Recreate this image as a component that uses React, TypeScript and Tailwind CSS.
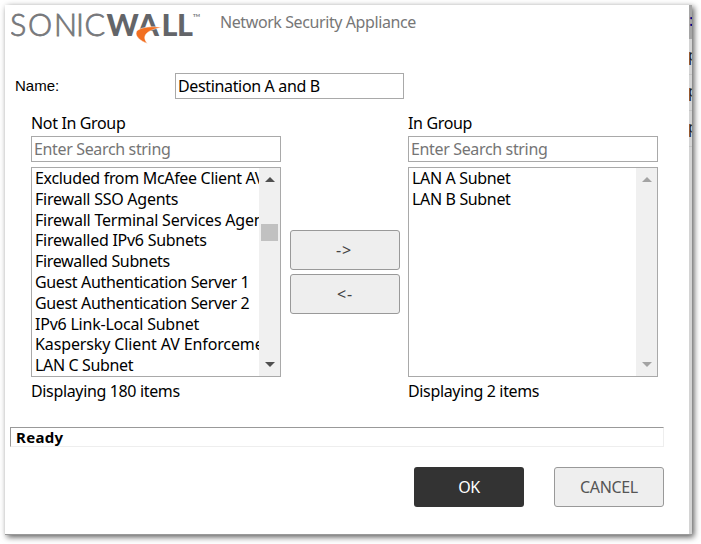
import React from 'react';

interface Item {
  name: string;
  tracking?: string;
}

interface GroupListProps {
  title: string;
  items: Item[];
  count: string;
  scrollable?: boolean;
}

const available: Item[] = [
  { name: 'Excluded from McAfee Client AV', tracking: 'tracking-[-0.32px]' },
  { name: 'Firewall SSO Agents', tracking: 'tracking-[-0.25px]' },
  { name: 'Firewall Terminal Services Agents', tracking: 'tracking-[-0.22px]' },
  { name: 'Firewalled IPv6 Subnets', tracking: 'tracking-[-0.26px]' },
  { name: 'Firewalled Subnets' },
  { name: 'Guest Authentication Server 1' },
  { name: 'Guest Authentication Server 2' },
  { name: 'IPv6 Link-Local Subnet', tracking: 'tracking-[-0.22px]' },
  { name: 'Kaspersky Client AV Enforcement', tracking: 'tracking-[-0.12px]' },
  { name: 'LAN C Subnet' },
];

const selected: Item[] = [{ name: 'LAN A Subnet' }, { name: 'LAN B Subnet' }];

function Logo() {
  return (
    <svg width="194" height="40" viewBox="0 0 194 40" className="shrink-0 tracking-normal">
      <text x="-1 17 43 65 73.5" y="30.5" fontFamily="Lato" fontSize="30.5" fontWeight="300" fill="#77787b" stroke="#77787b" strokeWidth="0.8">SONIC</text>
      <text x="95.5 126.5 150.5 166" y="30.5" fontFamily="Lato" fontSize="30.5" fontWeight="900" fill="#636569">WALL</text>
      <text x="182" y="11.5" fontFamily="Lato" fontSize="4.5" fontWeight="700" fill="#6d6e71">TM</text>
      <path d="M151 22.5C142 20.8 129 21.8 125.5 26.5C123.5 31 129 36 136.5 38.5C131.5 33 132 25.5 151 22.5Z" fill="#f26f21" stroke="#fff" strokeWidth="0.5" />
    </svg>
  );
}

function GroupList({ title, items, count, scrollable }: GroupListProps) {
  const arrow = scrollable ? '#505050' : '#a3a3a3';
  return (
    <div className="w-[250px]">
      <div className="h-[22px] leading-[22px]">{title}</div>
      <input
        placeholder="Enter Search string"
        className="mt-[2px] block h-[26px] w-full border border-[#a9a9a9] bg-white px-[2px] placeholder:text-[#757575] placeholder:opacity-100"
      />
      <div className="mt-[5px] flex h-[210px] border border-[#a9a9a9]">
        <ul className="min-w-0 flex-1 overflow-hidden pl-[3px]">
          {items.map((item) => (
            <li key={item.name} className={`h-[20.8px] whitespace-nowrap leading-[20.6px] ${item.tracking ?? ''}`}>{item.name}</li>
          ))}
        </ul>
        <div className="flex w-[21px] flex-col items-center bg-[#f0f0f0] pt-[9px] pb-[9px]">
          <svg width="10" height="5" className="shrink-0"><path d="M0 5L5 0L10 5Z" fill={arrow} /></svg>
          {scrollable && <div className="mt-[42px] h-[17px] w-[17px] bg-[#c1c1c1]" />}
          <svg width="10" height="5" className="mt-auto shrink-0"><path d="M0 0L5 5L10 0Z" fill={arrow} /></svg>
        </div>
      </div>
      <div className="mt-[3px] h-[22px] leading-[22px]">{count}</div>
    </div>
  );
}

function App() {
  return (
    <div className="h-[544px] w-[701px] overflow-hidden bg-white pt-[5px] pl-[5px] font-['Noto_Sans',sans-serif] text-[16px] tracking-[-0.35px] text-black">
      <div className="flex h-[530px] w-[687px] border-b border-[#999] shadow-[2px_2px_6px_rgba(0,0,0,0.65)]">
        <div className="w-[684px] bg-white">
          <div className="flex h-[40px]">
            <div className="ml-[6px] w-[209px]"><Logo /></div>
            <div className="h-[34px] leading-[34px] tracking-[-0.41px] text-[#777]">Network Security Appliance</div>
          </div>

          <div className="mt-[27px] flex h-[28px] items-center">
            <label className="ml-[10px] w-[160px] font-['Liberation_Sans',sans-serif] text-[15px] tracking-normal">Name:</label>
            <input
              defaultValue="Destination A and B"
              className="h-[26px] w-[229px] border border-[#a9a9a9] bg-white px-[2px]"
            />
          </div>

          <div className="ml-[26px] mt-[12px] flex">
            <GroupList title="Not In Group" items={available} count="Displaying 180 items" scrollable />
            <div className="ml-[9px] mr-[8px] flex w-[110px] flex-col gap-1 pt-[118px]">
              <button className="h-10 rounded-[3px] border border-[#999] bg-[#eee] pr-[2px] tracking-[0.8px] text-[#444]">-&gt;</button>
              <button className="h-10 rounded-[3px] border border-[#999] bg-[#eee] tracking-[0.8px] text-[#444]">&lt;-</button>
            </div>
            <GroupList title="In Group" items={selected} count="Displaying 2 items" />
          </div>

          <div className="ml-[5px] mt-[25px] h-[20px] w-[654px] border border-t-[#999] border-r-[#eee] border-b-[#eee] border-l-[#999] pl-[5px] text-[15px] font-bold leading-[19px] tracking-[0.3px]">
            Ready
          </div>

          <div className="mt-[20px] flex justify-end gap-[30px] pr-[25px]">
            <button className="h-10 w-[110px] rounded-[3px] bg-[#333] text-white">OK</button>
            <button className="h-10 w-[110px] rounded-[3px] border border-[#999] bg-[#eee] text-[#555]">CANCEL</button>
          </div>
        </div>

        {/* edge of the page behind the dialog */}
        <div className="w-[3px] overflow-hidden bg-[#d4d4d4]">
          <div className="h-[34px] bg-[#a5a5a5] pt-[3px] leading-6 text-[#000080]">:</div>
          <div className="-ml-px h-9 border-b border-[#c4c4c4] leading-8 text-[#222]">p</div>
          <div className="-ml-px h-9 border-b border-[#c4c4c4] leading-8 text-[#222]">p</div>
          <div className="-ml-px h-9 border-b border-[#c4c4c4] leading-8 text-[#222]">p</div>
        </div>
      </div>
    </div>
  );
}

export default App;
